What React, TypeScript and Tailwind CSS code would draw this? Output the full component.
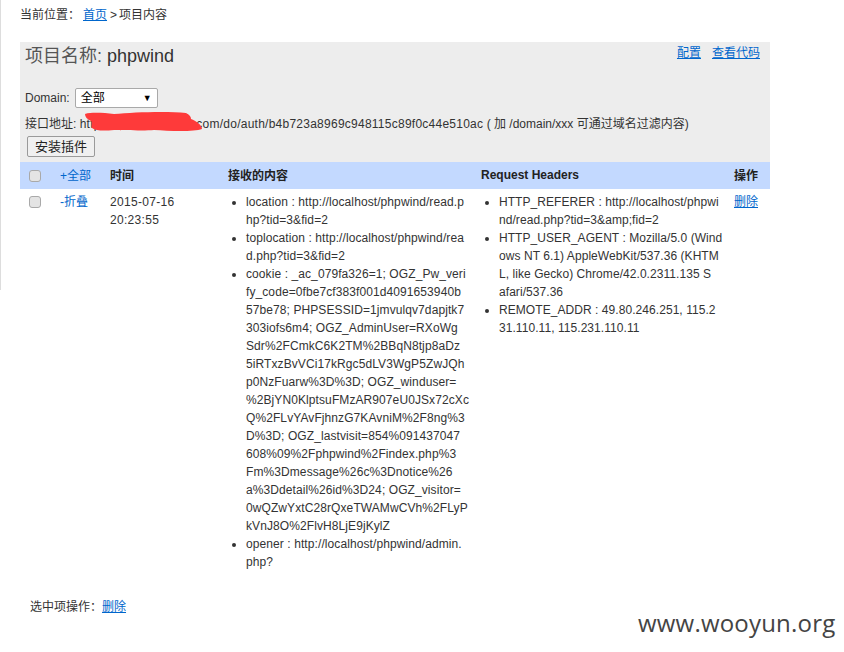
import React from 'react';

const FONT = "font-['Liberation_Sans','Noto_Sans_CJK_SC',sans-serif]";

// the wrapped lines are kept as they break in the page
const contentItems = [
  ['location : http://localhost/phpwind/read.p', 'hp?tid=3&fid=2'],
  ['toplocation : http://localhost/phpwind/rea', 'd.php?tid=3&fid=2'],
  [
    'cookie : _ac_079fa326=1; OGZ_Pw_veri',
    'fy_code=0fbe7cf383f001d4091653940b',
    '57be78; PHPSESSID=1jmvulqv7dapjtk7',
    '303iofs6m4; OGZ_AdminUser=RXoWg',
    'Sdr%2FCmkC6K2TM%2BBqN8tjp8aDz',
    '5iRTxzBvVCi17kRgc5dLV3WgP5ZwJQh',
    'p0NzFuarw%3D%3D; OGZ_winduser=',
    '%2BjYN0KlptsuFMzAR907eU0JSx72cXc',
    'Q%2FLvYAvFjhnzG7KAvniM%2F8ng%3',
    'D%3D; OGZ_lastvisit=854%091437047',
    '608%09%2Fphpwind%2Findex.php%3',
    'Fm%3Dmessage%26c%3Dnotice%26',
    'a%3Ddetail%26id%3D24; OGZ_visitor=',
    '0wQZwYxtC28rQxeTWAMwCVh%2FLyP',
    'kVnJ8O%2FlvH8LjE9jKylZ',
  ],
  ['opener : http://localhost/phpwind/admin.', 'php?'],
];

const headerItems = [
  ['HTTP_REFERER : http://localhost/phpwi', 'nd/read.php?tid=3&amp;fid=2'],
  [
    'HTTP_USER_AGENT : Mozilla/5.0 (Wind',
    'ows NT 6.1) AppleWebKit/537.36 (KHTM',
    'L, like Gecko) Chrome/42.0.2311.135 S',
    'afari/537.36',
  ],
  ['REMOTE_ADDR : 49.80.246.251, 115.2', '31.110.11, 115.231.110.11'],
];

function Check() {
  return <span className="block w-[12px] h-[12px] rounded-[3px] border border-[#a9a9a9] bg-[#e4e4e4]" />;
}

function Items({ items }: { items: string[][] }) {
  return (
    <ul className="list-disc pl-[14px] whitespace-nowrap">
      {items.map(lines => (
        <li key={lines[0]}>
          {lines.map(line => <span key={line} className="block">{line}</span>)}
        </li>
      ))}
    </ul>
  );
}

export default function App() {
  return (
    <div className={`${FONT} relative w-[844px] h-[652px] bg-white text-[12px] leading-[18px] text-[#333] overflow-hidden`}>
      <div className="absolute left-0 top-0 w-px h-[290px] bg-[#ddd]" />

      <div className="flex flex-col pl-5 w-[770px]">
        <div className="h-[42px] pt-[6px]">
          当前位置：<a className="ml-[3px] text-[#0066cc] underline">首页</a><span className="ml-[3px]">&gt;</span><span className="ml-[2px]">项目内容</span>
        </div>

        <div className="relative h-[120px] bg-[#ededed] px-[5px]">
          <h2 className="pt-[2px] h-[44px] text-[18px] leading-[24px] font-normal">
            <span className="text-[#555]">项目名称: </span>phpwind
          </h2>
          <div className="absolute right-[10px] top-[2px] flex gap-[11px]">
            <a className="text-[#0066cc] underline">配置</a>
            <a className="text-[#0066cc] underline">查看代码</a>
          </div>
          <div className="flex items-center h-[20px] mt-[2px]">
            <span>Domain:</span>
            <div className="ml-[5px] flex items-center justify-between w-[83px] h-[20px] px-[5px] bg-white border border-[#a9a9a9] rounded-[2px] text-black text-[12px]">
              <span>全部</span>
              <span className="text-[9px]">▼</span>
            </div>
          </div>
          <div className="mt-[7px] whitespace-nowrap">
            接口地址: <span className="tracking-[0.25px]">http://xxxxxxxxxxxxx.com/do/auth/b4b723a8969c948115c89f0c44e510ac</span> ( 加 /domain/xxx 可通过域名过滤内容)
          </div>
          <button className="block ml-[2px] mt-[3px] h-[21px] w-[68px] border border-[#9a9a9a] rounded-[2px] bg-[#f0f0f0] text-[13px] leading-[18px] text-[#222]">安装插件</button>
        </div>

        <table className="w-[750px] table-fixed border-collapse">
          <colgroup>
            <col className="w-[40px]" />
            <col className="w-[50px]" />
            <col className="w-[118px]" />
            <col className="w-[253px]" />
            <col className="w-[253px]" />
            <col className="w-[36px]" />
          </colgroup>
          <thead>
            <tr className="h-[27px] bg-[#c3d9ff] text-left text-[#222]">
              <th className="pl-[9px] font-normal"><Check /></th>
              <th className="font-normal text-[#0066cc]">+全部</th>
              <th className="font-bold">时间</th>
              <th className="font-bold">接收的内容</th>
              <th className="font-bold pb-[1px]">Request Headers</th>
              <th className="font-bold">操作</th>
            </tr>
          </thead>
          <tbody>
            <tr className="align-top">
              <td className="pl-[9px] pt-[7px]"><Check /></td>
              <td className="pt-[4px] text-[#0066cc]">-折叠</td>
              <td className="pt-[4px] tracking-[0.3px]">2015-07-16<br />20:23:55</td>
              <td className="pt-[4px] pl-[4px] tracking-[0.09px]"><Items items={contentItems} /></td>
              <td className="pt-[4px] pl-[4px] tracking-[0.06px]"><Items items={headerItems} /></td>
              <td className="pt-[4px]"><a className="text-[#0066cc] underline">删除</a></td>
            </tr>
          </tbody>
        </table>

        <div className="mt-[27px] pl-[10px]">
          选中项操作：<a className="text-[#0066cc] underline">删除</a>
        </div>
      </div>

      <svg className="absolute left-[84px] top-[111px]" width="120" height="21" viewBox="0 0 120 21">
        <path d="M1 3 C8 1 20 2 30 3 C50 1 85 0 102 2 C106 4 107 6 107 8 C112 10 118 14 118 18 C110 21 85 20 70 19 C60 20 40 19 30 19 C20 20 12 20 8 17 C7 14 9 12 7 10 C3 8 1 6 1 3 Z" fill="#fe3a3a" />
      </svg>

      <div className="absolute left-[638px] top-[608px] font-['Open_Sans',sans-serif] text-[24px] leading-[30px] tracking-[0.2px] text-[#444]">www.wooyun.org</div>
    </div>
  );
}
